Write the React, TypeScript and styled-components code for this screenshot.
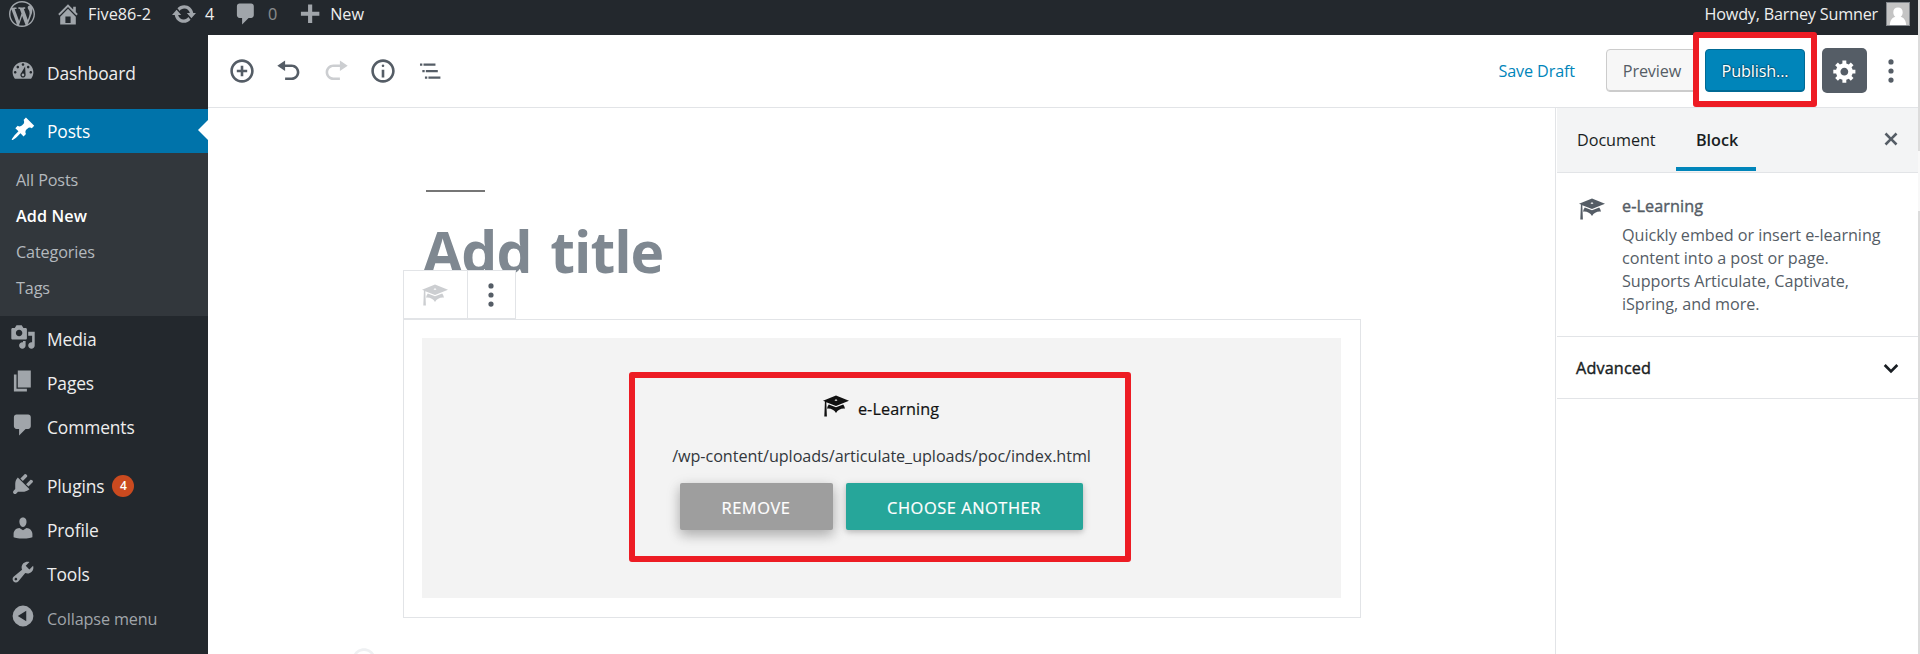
import React from "react";
import styled, { createGlobalStyle, css } from "styled-components";

const GlobalStyle = createGlobalStyle`
  *, *::before, *::after { box-sizing: border-box; }
  html, body { margin: 0; padding: 0; background: #fff; overflow: hidden; }
  body { font-family: "Open Sans", "Noto Sans", sans-serif; font-size: 16px; color: #191e23; }
`;

const ICONS = {
  wordpress:
    "M20 10c0-5.51-4.49-10-10-10C4.48 0 0 4.49 0 10c0 5.52 4.48 10 10 10 5.51 0 10-4.48 10-10zM7.78 15.37L4.37 6.22c.55-.02 1.17-.08 1.17-.08.5-.06.44-1.13-.06-1.11 0 0-1.45.11-2.37.11-.18 0-.37 0-.58-.01C4.12 2.69 6.87 1.11 10 1.11c2.33 0 4.45.87 6.05 2.34-.68-.11-1.65.39-1.65 1.58 0 .74.45 1.36.9 2.1.35.61.55 1.36.55 2.46 0 1.49-1.4 5-1.4 5l-3.03-8.37c.54-.02.82-.17.82-.17.5-.05.44-1.25-.06-1.22 0 0-1.44.12-2.38.12-.87 0-2.33-.12-2.33-.12-.5-.03-.56 1.2-.06 1.22l.92.08 1.26 3.41zM17.41 10c.24-.64.74-1.87.43-4.25.7 1.29 1.05 2.71 1.05 4.25 0 3.29-1.73 6.24-4.4 7.78.97-2.59 1.94-5.2 2.92-7.78zM6.1 18.09C3.12 16.65 1.11 13.53 1.11 10c0-1.3.23-2.48.72-3.59C3.25 10.3 4.67 14.2 6.1 18.09zm4.03-6.63l2.58 6.98c-.86.29-1.76.45-2.71.45-.79 0-1.57-.11-2.29-.33.81-2.38 1.62-4.74 2.42-7.1z",
  home: "M16 8.5l1.53 1.53-1.06 1.06L10 4.6l-6.47 6.49-1.06-1.06L10 2.5l4 4v-2h2v4zm-6-2.46l6 5.99V18H4v-5.97zM12 17v-5H8v5h4z",
  update:
    "M10.2 3.28c3.53 0 6.43 2.61 6.92 6h2.08l-3.5 4-3.5-4h2.32c-.45-1.97-2.21-3.45-4.32-3.45-1.45 0-2.73.71-3.54 1.78L4.95 5.66C6.23 4.2 8.11 3.28 10.2 3.28zm-.4 13.44c-3.52 0-6.43-2.61-6.92-6H.8l3.5-4c1.17 1.33 2.33 2.67 3.5 4H5.48c.45 1.97 2.21 3.45 4.32 3.45 1.45 0 2.73-.71 3.54-1.78l1.71 1.95c-1.28 1.46-3.15 2.38-5.25 2.38z",
  comments:
    "M5 2h9c1.1 0 2 .9 2 2v7c0 1.1-.9 2-2 2h-2l-5 5v-5H5c-1.1 0-2-.9-2-2V4c0-1.1.9-2 2-2z",
  plus: "M17.200 8.200v3.200H11.700v5.500H8.500v-5.500H3V8.200h5.500V2.700h3.200v5.500h5.500z",
  dashboard:
    "M3.76 16h12.48c1.09-1.37 1.76-3.11 1.76-5 0-4.42-3.58-8-8-8s-8 3.58-8 8c0 1.89.67 3.63 1.76 5zM10 4c.55 0 1 .45 1 1s-.45 1-1 1-1-.45-1-1 .45-1 1-1zM6 6c.55 0 1 .45 1 1s-.45 1-1 1-1-.45-1-1 .45-1 1-1zm8 0c.55 0 1 .45 1 1s-.45 1-1 1-1-.45-1-1 .45-1 1-1zM8.630 11.550L11.600 6.500 12 13c0 1.100-.9 2-2 2s-2-.9-2-2c0-.57.24-1.080.63-1.450zM4 10c.55 0 1 .45 1 1s-.45 1-1 1-1-.45-1-1 .45-1 1-1zm12 0c.55 0 1 .45 1 1s-.45 1-1 1-1-.45-1-1 .45-1 1-1zm-5 3c0-.55-.45-1-1-1s-1 .45-1 1 .45 1 1 1 1-.45 1-1z",
  post: "M10.44 3.02l1.82-1.82 6.36 6.35-1.83 1.82c-1.05-.68-2.48-.57-3.41.36l-.75.75c-.92.93-1.04 2.35-.35 3.41l-1.83 1.82-2.41-2.41-2.8 2.79c-.42.42-3.38 2.71-3.8 2.29s1.86-3.39 2.28-3.81l2.79-2.79L4.1 9.36l1.83-1.82c1.05.69 2.48.57 3.4-.36l.75-.75c.93-.92 1.05-2.35.36-3.41z",
  media:
    "M13 11V4c0-.55-.45-1-1-1h-1.670L9 1H5L3.670 3H2c-.55 0-1 .45-1 1v7c0 .55.45 1 1 1h10c.55 0 1-.45 1-1zM7 4.500c1.380 0 2.500 1.120 2.500 2.500S8.380 9.500 7 9.500 4.500 8.380 4.500 7 5.620 4.500 7 4.500zM14 6h5v10.500c0 1.380-1.120 2.500-2.500 2.500S14 17.880 14 16.500s1.120-2.500 2.500-2.500c.17 0 .34.02.5.05V9h-3V6zm-4 8.050V13h2v3.500c0 1.380-1.120 2.500-2.500 2.500S7 17.880 7 16.500 8.120 14 9.500 14c.17 0 .34.02.5.05z",
  page: "M6 15V2h10v13H6zm-1 1h8v2H3V5h2v11z",
  plugins:
    "M13.11 4.36L9.87 7.6 8 5.73l3.24-3.24c.35-.34 1.05-.2 1.56.32.52.51.66 1.21.31 1.55zm-8 1.77l.91-1.12 9.01 9.01-1.19.84c-.71.71-2.63 1.16-3.82 1.16H6.14L4.9 17.26c-.59.59-1.54.59-2.12 0-.59-.58-.59-1.53 0-2.12l1.24-1.24v-3.88c0-1.13.4-3.19 1.09-3.89zm7.26 3.97l3.24-3.24c.34-.35 1.04-.21 1.55.31.52.51.66 1.21.31 1.55l-3.24 3.25z",
  users:
    "M10 9.25c-2.27 0-2.73-3.44-2.73-3.44C7 4.02 7.82 2 9.97 2c2.16 0 2.98 2.02 2.71 3.81 0 0-.41 3.44-2.68 3.44zm0 2.57L12.72 10c2.39 0 4.52 2.33 4.52 4.53v2.49s-3.65 1.13-7.24 1.13c-3.65 0-7.24-1.13-7.24-1.13v-2.49c0-2.25 1.94-4.48 4.47-4.48z",
  tools:
    "M16.68 9.77c-1.34 1.34-3.3 1.67-4.95.99l-5.41 6.52c-.99.99-2.59.99-3.58 0s-.99-2.59 0-3.57l6.52-5.42c-.68-1.65-.35-3.61.99-4.95 1.28-1.28 3.12-1.62 4.72-1.06l-2.89 2.89 2.82 2.82 2.86-2.87c.53 1.58.18 3.39-1.08 4.65zM3.81 16.21c.4.39 1.04.39 1.43 0 .4-.4.4-1.04 0-1.43-.39-.4-1.03-.4-1.43 0-.39.39-.39 1.03 0 1.43z",
  collapse: "M10 2a8 8 0 1 0 0 16 8 8 0 1 0 0-16zM12.500 6v8L6 10z",
  insert:
    "M10 1c-5 0-9 4-9 9s4 9 9 9 9-4 9-9-4-9-9-9zm0 16c-3.900 0-7-3.100-7-7s3.100-7 7-7 7 3.100 7 7-3.100 7-7 7zm1-11H9v3H6v2h3v3h2v-3h3V9h-3V6z",
  undo: "M12 5H7V2L1 6l6 4V7h5c2.200 0 4 1.800 4 4s-1.800 4-4 4H7v2h5c3.300 0 6-2.700 6-6s-2.700-6-6-6z",
  redo: "M8 5h5V2l6 4-6 4V7H8c-2.200 0-4 1.800-4 4s1.800 4 4 4h5v2H8c-3.300 0-6-2.700-6-6s2.700-6 6-6z",
  info: "M9 15h2V9H9v6zm1-10c-.5 0-1 .5-1 1s.5 1 1 1 1-.5 1-1-.5-1-1-1zm0-4c-5 0-9 4-9 9s4 9 9 9 9-4 9-9-4-9-9-9zm0 16c-3.900 0-7-3.100-7-7s3.100-7 7-7 7 3.100 7 7-3.100 7-7 7z",
  outline:
    "M2.300 4.200h1.800v1.700H2.300zM5 4.200h9.200v1.700H5zM4.100 9.200h1.800v1.700H4.100zM6.800 9.200H16v1.700H6.800zM6.100 14.200h1.800v1.700H6.100zM8.800 14.200h9.200v1.700H8.800z",
  ellipsis:
    "M10 1a2 2 0 1 0 0 4 2 2 0 1 0 0-4zM10 8a2 2 0 1 0 0 4 2 2 0 1 0 0-4zM10 15a2 2 0 1 0 0 4 2 2 0 1 0 0-4z",
  gear: "M18 12h-2.180c-.17.7-.44 1.350-.81 1.930l1.540 1.540-2.100 2.100-1.540-1.540c-.58.36-1.230.63-1.910.79V19H8v-2.180c-.68-.16-1.330-.43-1.910-.79l-1.540 1.540-2.120-2.120 1.540-1.540c-.36-.58-.63-1.230-.79-1.910H1V9.030h2.170c.16-.7.44-1.350.8-1.940L2.430 5.550l2.100-2.100 1.540 1.540c.58-.37 1.240-.64 1.930-.81V2h3v2.180c.68.16 1.330.43 1.910.79l1.540-1.540 2.120 2.120-1.540 1.540c.36.59.64 1.240.8 1.940H18V12zm-8.500 1.500c1.660 0 3-1.340 3-3s-1.340-3-3-3-3 1.340-3 3 1.340 3 3 3z",
  learn:
    "M10 10L2.540 7.020 3 18H1l.48-11.410L0 6l10-4 10 4zm0-5c-.55 0-1 .22-1 .5s.45.5 1 .5 1-.22 1-.5-.45-.5-1-.5zm0 6l5.570-2.230c.71.94 1.200 2.070 1.360 3.300-.3-.04-.61-.07-.93-.07-2.550 0-4.780 1.370-6 3.410C8.780 13.370 6.550 12 4 12c-.32 0-.63.03-.93.07.16-1.230.65-2.360 1.360-3.300z",
  close:
    "M14.950 6.460L11.410 10l3.540 3.540-1.410 1.410L10 11.420l-3.530 3.530-1.420-1.420L8.580 10 5.050 6.470l1.420-1.420L10 8.580l3.540-3.530z",
  chevron: "M6.200 7.200L10 11l3.800-3.800L15.200 8.600 10 13.800 4.800 8.600z",
};

type IconName = keyof typeof ICONS;

const IconSvg = styled.svg<{ $size: number }>`
  display: block;
  flex: none;
  width: ${(p) => p.$size}px;
  height: ${(p) => p.$size}px;
  fill: currentColor;
`;

const Icon = ({ name, size = 26 }: { name: IconName; size?: number }) => (
  <IconSvg $size={size} viewBox="0 0 20 20" aria-hidden="true">
    <path d={ICONS[name]} fillRule="evenodd" />
  </IconSvg>
);

const Screen = styled.div`
  display: grid;
  grid-template: 35px 619px / 208px 1710px 2px;
  width: 1920px;
  height: 654px;
  overflow: hidden;
`;

/* Admin bar */
const AdminBar = styled.header`
  grid-column: 1 / 3;
  display: flex;
  justify-content: space-between;
  background: #23282d;
  color: #eee;
  font-size: 16.2px;
  letter-spacing: -0.2px;
  padding: 0 8px 0 9px;
`;
const BarGroup = styled.div`
  display: flex;
  height: 27px;
`;
const BarItem = styled.div<{ $gap?: number; $ml?: number; $dim?: boolean; $wide?: boolean }>`
  display: flex;
  align-items: center;
  gap: ${(p) => p.$gap ?? 8}px;
  margin-left: ${(p) => p.$ml ?? 0}px;
  letter-spacing: ${(p) => (p.$wide ? "0.05px" : "-0.2px")};
  svg { color: #a0a5aa; }
  span { opacity: ${(p) => (p.$dim ? 0.5 : 1)}; padding-top: 1px; }
`;
const Avatar = styled.svg`
  width: 24px;
  height: 24px;
  display: block;
`;

/* Admin menu */
const Sidebar = styled.nav`
  background: #23282d;
  color: #eee;
  padding-top: 16px;
  font-size: 17.4px;
  letter-spacing: -0.12px;
`;
const MenuItem = styled.div<{ $active?: boolean; $mt?: number; $muted?: boolean }>`
  position: relative;
  display: flex;
  align-items: center;
  height: 44px;
  margin-top: ${(p) => p.$mt ?? 0}px;
  padding-left: 10px;
  gap: 11px;
  svg { color: #a0a5aa; margin-top: -4px; }
  ${(p) =>
    p.$active &&
    css`
      background: #0073aa;
      color: #fff;
      svg { color: #fff; }
      &::after {
        content: "";
        position: absolute;
        right: 0;
        top: 11px;
        border: 10.5px solid transparent;
        border-right-color: #fff;
        border-left-width: 0;
      }
    `}
  ${(p) =>
    p.$muted &&
    css`
      color: #a0a5aa;
      font-size: 16.2px;
      padding-top: 1px;
      svg { margin-top: -5px; }
    `}
`;
const Submenu = styled.div`
  background: #32373c;
  color: #b4b9be;
  height: 163px;
  padding: 9px 0 0 16px;
  font-size: 16.2px;
`;
const SubItem = styled.div<{ $current?: boolean }>`
  height: 36px;
  line-height: 36px;
  ${(p) => p.$current && "color: #fff; font-weight: 600; letter-spacing: 0.1px;"}
`;
const CountBadge = styled.span`
  display: flex;
  align-items: center;
  justify-content: center;
  width: 22px;
  height: 22px;
  margin: -1px 0 0 -3px;
  border-radius: 50%;
  background: #ca4a1f;
  color: #fff;
  font-size: 12px;
  font-weight: 600;
`;

/* Editor */
const Editor = styled.main`
  display: grid;
  grid-template: 73px 1fr / 1347px 363px;
  min-width: 0;
`;
const Toolbar = styled.div`
  grid-column: 1 / 3;
  display: flex;
  align-items: center;
  justify-content: space-between;
  border-bottom: 1px solid #e2e4e7;
  color: #555d66;
  padding: 0 4px 1px 10.5px;
  font-size: 16.2px;
  letter-spacing: -0.12px;
`;
const ToolGroup = styled.div`
  display: flex;
  align-items: center;
`;
const ToolButton = styled.button<{ $disabled?: boolean }>`
  display: flex;
  align-items: center;
  justify-content: center;
  width: 47px;
  height: 47px;
  padding: 0;
  border: 0;
  background: none;
  color: ${(p) => (p.$disabled ? "#ccced1" : "#555d66")};
`;
const GearButton = styled(ToolButton)`
  width: 45px;
  height: 45px;
  margin-left: 17px;
  border-radius: 5px;
  background: #555d66;
  color: #fff;
`;
const SaveDraft = styled.span`
  color: #0085ba;
  margin-right: 31px;
`;
const Button = styled.button<{ $primary?: boolean }>`
  display: block;
  height: 43px;
  width: ${(p) => (p.$primary ? 100 : 92)}px;
  padding: 0;
  margin-left: ${(p) => (p.$primary ? 7 : 0)}px;
  font: inherit;
  letter-spacing: inherit;
  border-radius: 4px;
  border: 1px solid ${(p) => (p.$primary ? "#006a95" : "#ccc")};
  background: ${(p) => (p.$primary ? "#0085ba" : "#f7f7f7")};
  color: ${(p) => (p.$primary ? "#fff" : "#555d66")};
  box-shadow: inset 0 -1px 0 ${(p) => (p.$primary ? "#006a95" : "#ccc")};
  text-shadow: ${(p) => (p.$primary ? "0 -1px 1px #005d82, 1px 0 1px #005d82, 0 1px 1px #005d82, -1px 0 1px #005d82" : "none")};
`;
const PublishArea = styled.div`
  position: relative;
`;
const Highlight = styled.div`
  position: absolute;
  z-index: 3;
  left: -5px;
  top: -17px;
  width: 124px;
  height: 75px;
  border: 6px solid #ed1c24;
  border-radius: 3px;
  pointer-events: none;
`;

const Canvas = styled.section`
  padding: 82px 0 0 195px;
  overflow: hidden;
`;
const TitleRule = styled.div`
  width: 59px;
  height: 2px;
  margin-left: 23px;
  background: #767676;
`;
const Title = styled.h1`
  margin: 19px 0 0 20px;
  height: 81px;
  line-height: 80px;
  font-size: 57px;
  font-weight: 700;
  letter-spacing: -1px;
  word-spacing: 5px;
  color: #7f8891;
`;
const BlockTools = styled.div`
  position: relative;
  display: flex;
  width: 113px;
  height: 49px;
  margin-top: -22px;
  background: #fff;
  border: 1px solid #e2e4e7;
`;
const BlockToolCell = styled.div<{ $muted?: boolean }>`
  display: flex;
  align-items: center;
  justify-content: center;
  flex: ${(p) => (p.$muted ? "0 0 64px" : "1")};
  padding-right: ${(p) => (p.$muted ? 2 : 1)}px;
  color: ${(p) => (p.$muted ? "#ccced1" : "#555d66")};
  border-right: ${(p) => (p.$muted ? "1px solid #e2e4e7" : "0")};
`;
const Block = styled.div`
  width: 958px;
  height: 299px;
  padding: 18px;
  border: 1px solid #e2e4e7;
`;
const Placeholder = styled.div`
  display: flex;
  justify-content: center;
  width: 919px;
  height: 260px;
  padding: 34px 4px 0 0;
  background: #f3f3f3;
`;
const Frame = styled.div`
  display: flex;
  flex-direction: column;
  align-items: center;
  width: 502px;
  height: 190px;
  border: 6px solid #ed1c24;
  border-radius: 3px;
`;
const BlockLabel = styled.div`
  display: flex;
  align-items: center;
  gap: 9px;
  height: 26px;
  margin: 15px 0 0 3px;
  font-size: 16.2px;
  letter-spacing: 0.1px;
  -webkit-text-stroke: 0.2px currentColor;
  color: #111;
  span { padding-top: 6px; }
`;
const Path = styled.div`
  margin: 22px 0 0 4px;
  height: 30px;
  line-height: 30px;
  font-size: 16.2px;
  letter-spacing: -0.06px;
  color: #32373c;
  white-space: nowrap;
`;
const Actions = styled.div`
  display: flex;
  gap: 13px;
  margin: 12px 0 0 3px;
`;
const Action = styled.button<{ $raised?: boolean }>`
  width: ${(p) => (p.$raised ? 153 : 237)}px;
  height: 47px;
  padding: 2px 0 0;
  border: 0;
  border-radius: 2px;
  background: ${(p) => (p.$raised ? "#9e9e9e" : "#26a69a")};
  box-shadow: ${(p) =>
    p.$raised
      ? "0 5px 12px rgba(0,0,0,.18), 0 4px 15px rgba(0,0,0,.15)"
      : "0 2px 5px rgba(0,0,0,.16), 0 2px 10px rgba(0,0,0,.12)"};
  color: #fff;
  font: 400 16.4px "Open Sans", sans-serif;
  letter-spacing: 0.55px;
  -webkit-text-stroke: 0.2px currentColor;
`;
const Inserter = styled.div`
  margin: 29px 0 0 -52px;
  color: #eef0f2;
`;

/* Settings */
const Settings = styled.aside`
  display: flex;
  flex-direction: column;
  border-left: 1px solid #e2e4e7;
  padding-left: 1px;
  color: #555d66;
  font-size: 16.2px;
  letter-spacing: -0.05px;
`;
const Tabs = styled.div`
  display: flex;
  align-items: stretch;
  height: 65px;
  background: #f3f4f5;
  border-bottom: 1px solid #e2e4e7;
  color: #191e23;
  padding-bottom: 1px;
`;
const Tab = styled.div<{ $active?: boolean; $w: number }>`
  width: ${(p) => p.$w}px;
  padding: 0 0 0 20px;
  line-height: 65px;
  border-bottom: 4px solid ${(p) => (p.$active ? "#0085ba" : "transparent")};
  font-weight: ${(p) => (p.$active ? 600 : 400)};
`;
const CloseTab = styled.div`
  margin: 18px 14px 0 auto;
  color: #555d66;
`;
const BlockCard = styled.div`
  display: flex;
  gap: 17px;
  height: 164px;
  padding: 22px 20px 0 22px;
  border-bottom: 1px solid #e2e4e7;
  svg { margin-top: 1px; }
`;
const CardTitle = styled.div`
  height: 23px;
  line-height: 23px;
  margin-bottom: 6px;
  letter-spacing: 0.1px;
  -webkit-text-stroke: 0.4px currentColor;
`;
const CardText = styled.div`
  line-height: 23px;
  white-space: nowrap;
`;
const PanelToggle = styled.div`
  display: flex;
  align-items: center;
  justify-content: space-between;
  height: 62px;
  padding: 1px 13px 0 19px;
  border-bottom: 1px solid #e2e4e7;
  color: #191e23;
  letter-spacing: 0.15px;
  -webkit-text-stroke: 0.4px currentColor;
  svg { -webkit-text-stroke: 0; }
`;

const ScrollTrack = styled.div`
  grid-column: 3;
  grid-row: 1 / 3;
  background: #dcdcdc;
`;
const ScrollGap = styled.div`
  height: 60px;
  margin-top: 151px;
  background: #f8f8f8;
`;

const MENU: { icon: IconName; label: string; count?: number; mt?: number }[] = [
  { icon: "media", label: "Media", mt: 1 },
  { icon: "page", label: "Pages" },
  { icon: "comments", label: "Comments" },
  { icon: "plugins", label: "Plugins", count: 4, mt: 15 },
  { icon: "users", label: "Profile" },
  { icon: "tools", label: "Tools" },
];

export default function App() {
  return (
    <>
      <GlobalStyle />
      <Screen>
        <AdminBar>
          <BarGroup>
            <BarItem><Icon name="wordpress" /></BarItem>
            <BarItem $ml={20} $gap={7} $wide><Icon name="home" /><span>Five86-2</span></BarItem>
            <BarItem $ml={20}><Icon name="update" /><span>4</span></BarItem>
            <BarItem $ml={19} $gap={9} $dim><Icon name="comments" /><span>0</span></BarItem>
            <BarItem $ml={20} $gap={7} $wide><Icon name="plus" /><span>New</span></BarItem>
          </BarGroup>
          <BarGroup>
            <BarItem>
              <span>Howdy, Barney Sumner</span>
              <Avatar viewBox="0 0 24 24">
                <rect x=".5" y=".5" width="23" height="23" fill="#c4c4c4" stroke="#82878c" />
                <path d="M12 5.5c3 0 4.7 2 4.700 4.700 0 2-.8 3.600-2 4.500 3.300.9 5 3.500 5.500 8.300H3.800c.5-4.800 2.200-7.400 5.500-8.300-1.200-.9-2-2.500-2-4.500C7.300 7.500 9 5.500 12 5.500z" fill="#fff" />
              </Avatar>
            </BarItem>
          </BarGroup>
        </AdminBar>

        <Sidebar>
          <MenuItem><Icon name="dashboard" />Dashboard</MenuItem>
          <MenuItem $active $mt={14}><Icon name="post" />Posts</MenuItem>
          <Submenu>
            <SubItem>All Posts</SubItem>
            <SubItem $current>Add New</SubItem>
            <SubItem>Categories</SubItem>
            <SubItem>Tags</SubItem>
          </Submenu>
          {MENU.map((m) => (
            <MenuItem key={m.label} $mt={m.mt}>
              <Icon name={m.icon} />
              {m.label}
              {m.count && <CountBadge>{m.count}</CountBadge>}
            </MenuItem>
          ))}
          <MenuItem $muted><Icon name="collapse" />Collapse menu</MenuItem>
        </Sidebar>

        <Editor>
          <Toolbar>
            <ToolGroup>
              <ToolButton><Icon name="insert" /></ToolButton>
              <ToolButton><Icon name="undo" /></ToolButton>
              <ToolButton $disabled><Icon name="redo" /></ToolButton>
              <ToolButton><Icon name="info" /></ToolButton>
              <ToolButton><Icon name="outline" /></ToolButton>
            </ToolGroup>
            <ToolGroup>
              <SaveDraft>Save Draft</SaveDraft>
              <Button>Preview</Button>
              <PublishArea>
                <Button $primary>Publish...</Button>
                <Highlight />
              </PublishArea>
              <GearButton><Icon name="gear" /></GearButton>
              <ToolButton><Icon name="ellipsis" /></ToolButton>
            </ToolGroup>
          </Toolbar>

          <Canvas>
            <TitleRule />
            <Title>Add title</Title>
            <BlockTools>
              <BlockToolCell $muted><Icon name="learn" /></BlockToolCell>
              <BlockToolCell><Icon name="ellipsis" /></BlockToolCell>
            </BlockTools>
            <Block>
              <Placeholder>
                <Frame>
                  <BlockLabel><Icon name="learn" /><span>e-Learning</span></BlockLabel>
                  <Path>/wp-content/uploads/articulate_uploads/poc/index.html</Path>
                  <Actions>
                    <Action $raised>REMOVE</Action>
                    <Action>CHOOSE ANOTHER</Action>
                  </Actions>
                </Frame>
              </Placeholder>
            </Block>
            <Inserter><Icon name="insert" /></Inserter>
          </Canvas>

          <Settings>
            <Tabs>
              <Tab $w={119}>Document</Tab>
              <Tab $w={80} $active>Block</Tab>
              <CloseTab><Icon name="close" /></CloseTab>
            </Tabs>
            <BlockCard>
              <Icon name="learn" />
              <div>
                <CardTitle>e-Learning</CardTitle>
                <CardText>
                  Quickly embed or insert e-learning<br />
                  content into a post or page.<br />
                  Supports Articulate, Captivate,<br />
                  iSpring, and more.
                </CardText>
              </div>
            </BlockCard>
            <PanelToggle>Advanced<Icon name="chevron" size={28} /></PanelToggle>
          </Settings>
        </Editor>

        <ScrollTrack><ScrollGap /></ScrollTrack>
      </Screen>
    </>
  );
}
